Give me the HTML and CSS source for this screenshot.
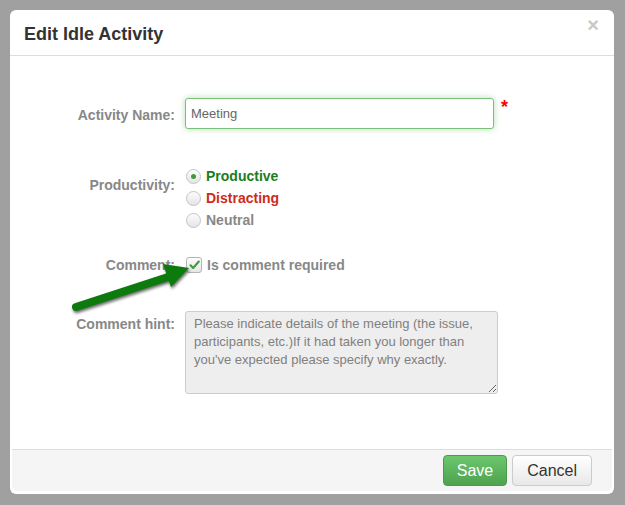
FILE: index.html
```html
<!DOCTYPE html>
<html>
<head>
	<title>Edit Idle Activity</title>
	<link rel="stylesheet" href="styles.css">
</head>
<body>
	<div class="modal">
		<div class="modal-header">
			<h3>Edit Idle Activity</h3>
			<span class="close">&times;</span>
		</div>
		<div class="modal-body">
			<div class="row row-name">
				<label class="label">Activity Name:</label>
				<div class="field">
					<input type="text" class="text-input" value="Meeting">
					<span class="required">*</span>
				</div>
			</div>
			<div class="row row-productivity">
				<label class="label">Productivity:</label>
				<div class="options">
					<div class="option"><span class="radio checked"></span><span class="productive">Productive</span></div>
					<div class="option"><span class="radio"></span><span class="distracting">Distracting</span></div>
					<div class="option"><span class="radio"></span><span class="neutral">Neutral</span></div>
				</div>
			</div>
			<div class="row row-comment">
				<label class="label">Comment:</label>
				<div class="option">
					<span class="checkbox">
						<svg width="11" height="10" viewBox="0 0 11 10"><path d="M1.5 5.2 L4.2 8 L9.8 1.5" fill="none" stroke="#3c9a3c" stroke-width="2" stroke-linecap="round" stroke-linejoin="round"/></svg>
					</span>
					<span class="neutral">Is comment required</span>
				</div>
			</div>
			<div class="row row-hint">
				<label class="label">Comment hint:</label>
				<textarea class="hint" readonly>Please indicate details of the meeting (the issue, participants, etc.)If it had taken you longer than you've expected please specify why exactly.</textarea>
			</div>

			<!-- annotation arrow pointing at the checkbox -->
			<svg class="arrow" width="130" height="56" viewBox="0 0 130 56">
				<line x1="6" y1="46" x2="98" y2="16" stroke="#0d7a0d" stroke-width="8" stroke-linecap="round"/>
				<polygon points="119,7 101,26 93,3" fill="#0d7a0d"/>
			</svg>
		</div>
		<div class="modal-footer">
			<button class="btn btn-success">Save</button>
			<button class="btn">Cancel</button>
		</div>
	</div>
</body>
</html>
```

FILE: styles.css
```css
body {
	margin: 0;
	padding: 0;
	background-color: #a0a0a0;
	font-family: "Liberation Sans", Arial, sans-serif;
}
.modal {
	margin: 10px 0 0 10px;
	width: 604px;
	height: 484px;
	background-color: #fff;
	border-radius: 6px;
	display: flex;
	flex-direction: column;
}
.modal-header {
	height: 45px;
	border-bottom: 1px solid #ddd;
	padding: 0 14px;
	display: flex;
	align-items: center;
	justify-content: space-between;
}
.modal-header h3 {
	margin: 0;
	font-size: 18px;
	color: #333;
	font-weight: bold;
	position: relative;
	top: 2px;
}
.close {
	color: #c8c8c8;
	font-size: 20px;
	font-weight: bold;
	align-self: flex-start;
	margin-top: 4px;
	margin-right: 1px;
}
.modal-body {
	flex: 1;
	position: relative;
	padding-top: 42px;
}
.row {
	display: flex;
	align-items: flex-start;
}
.label {
	width: 165px;
	margin-right: 10px;
	text-align: right;
	font-size: 14px;
	font-weight: bold;
	color: #888;
}
.row-name .label {
	line-height: 31px;
	padding-top: 2px;
}
.field {
	display: flex;
	align-items: flex-start;
}
.text-input {
	width: 309px;
	height: 31px;
	box-sizing: border-box;
	border: 1px solid #78c278;
	border-radius: 3px;
	box-shadow: 0 0 6px rgba(90, 180, 90, 0.45);
	padding: 0 5px;
	font-size: 13px;
	font-family: "Liberation Sans", Arial, sans-serif;
	color: #666;
	outline: none;
}
.required {
	color: #f00;
	font-size: 18px;
	font-weight: bold;
	margin-left: 7px;
	line-height: 18px;
}
.row-productivity {
	margin-top: 34px;
}
.row-productivity .label {
	line-height: 22px;
	padding-top: 9px;
}
.option {
	display: flex;
	align-items: center;
	height: 22px;
	font-size: 14px;
	font-weight: bold;
}
.radio {
	width: 13px;
	height: 13px;
	border: 1px solid #c4c4c4;
	border-radius: 50%;
	background: linear-gradient(#fdfdfd, #e4e4e4);
	margin: 0 5px 0 1px;
	display: flex;
	align-items: center;
	justify-content: center;
}
.radio.checked::after {
	content: "";
	width: 5px;
	height: 5px;
	border-radius: 50%;
	background-color: #3f9a3f;
}
.productive {
	color: #1c7d1c;
}
.distracting {
	color: #cf2a20;
}
.neutral {
	color: #888;
}
.row-comment {
	margin-top: 24px;
}
.row-comment .label,
.row-comment .option {
	line-height: 20px;
	height: 20px;
}
.checkbox {
	width: 14px;
	height: 14px;
	border: 1px solid #b4b4b4;
	border-radius: 3px;
	background: linear-gradient(#fdfdfd, #e6e6e6);
	margin: 0 5px 0 1px;
	display: flex;
	align-items: center;
	justify-content: center;
}
.row-hint {
	margin-top: 36px;
}
.row-hint .label {
	line-height: 18px;
	padding-top: 4px;
}
.hint {
	width: 313px;
	height: 83px;
	box-sizing: border-box;
	border: 1px solid #ccc;
	border-radius: 3px;
	background-color: #eee;
	color: #808080;
	font-size: 13px;
	line-height: 18px;
	font-family: "Liberation Sans", Arial, sans-serif;
	padding: 3px 8px;
	margin: 0;
	outline: none;
}
.arrow {
	position: absolute;
	left: 60px;
	top: 205px;
	filter: drop-shadow(1px 2px 1.5px rgba(0, 0, 0, 0.6));
}
.modal-footer {
	margin: 0 2px 3px 2px;
	height: 42px;
	box-sizing: border-box;
	border-top: 1px solid #ddd;
	background-color: #f5f5f5;
	border-radius: 0 0 5px 5px;
	padding: 5px 20px 0 0;
	display: flex;
	justify-content: flex-end;
	align-items: flex-start;
	gap: 5px;
}
.btn {
	height: 31px;
	padding: 0 14px;
	font-size: 16px;
	font-family: "Liberation Sans", Arial, sans-serif;
	color: #333;
	border: 1px solid #ccc;
	border-radius: 4px;
	background: linear-gradient(#fff, #e8e8e8);
}
.btn-success {
	color: #fff;
	border-color: #4a9a4a;
	background: linear-gradient(#6cc76c, #4fa24f);
	padding: 0 13px;
}
```
